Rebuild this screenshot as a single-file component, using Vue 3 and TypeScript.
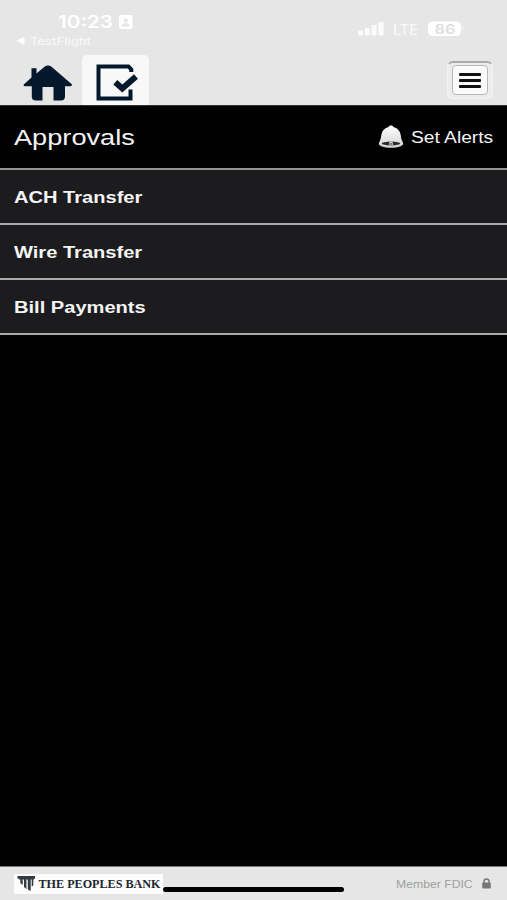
<script setup lang="ts">
import { ref } from 'vue'

interface ApprovalItem {
  id: string
  label: string
}

const items: ApprovalItem[] = [
  { id: 'ach', label: 'ACH Transfer' },
  { id: 'wire', label: 'Wire Transfer' },
  { id: 'bill', label: 'Bill Payments' },
]

const activeTab = ref<'home' | 'approvals'>('approvals')
</script>

<template>
  <div class="screen">
    <header class="top">
      <svg class="status" width="507" height="55" viewBox="0 0 507 55">
        <text class="time" x="58" y="28" textLength="55" lengthAdjust="spacingAndGlyphs">10:23</text>
        <rect x="119" y="15" width="13.5" height="14" rx="2" fill="#fff" />
        <circle cx="125.8" cy="20.4" r="2" fill="#e6e6e6" />
        <path d="M121.5 26.5c.4-4.6 8.200-4.600 8.600 0z" fill="#e6e6e6" />
        <path d="M16 40.700l8.500-4v8z" fill="#fff" />
        <text class="back" x="30" y="44.500" textLength="61" lengthAdjust="spacingAndGlyphs">TestFlight</text>
        <g fill="#fbfbfb">
          <rect x="358" y="30.500" width="5" height="5" rx="1.300" />
          <rect x="364.700" y="28" width="5" height="7.500" rx="1.300" />
          <rect x="371.500" y="25" width="5" height="10.500" rx="1.300" />
          <rect x="378.500" y="22" width="5" height="13.500" rx="1.300" />
        </g>
        <text class="lte" x="393" y="34.800" textLength="25" lengthAdjust="spacingAndGlyphs">LTE</text>
        <path d="M433 21.500h23q5 0 5 5v4.500q0 5-5 5h-23q-5 0-5-5v-4.500q0-5 5-5z" fill="#fff" />
        <rect x="462" y="26" width="1.500" height="5" rx=".7" fill="#f1f1f1" />
        <text class="level" x="434.500" y="33.500" textLength="21" lengthAdjust="spacingAndGlyphs">86</text>
      </svg>
      <nav class="nav">
        <button class="tab home" :class="{ active: activeTab === 'home' }" aria-label="Home" @click="activeTab = 'home'">
          <svg width="50" height="36" viewBox="0 0 50 36">
            <path
              d="M8.500 3.200h5v5.300L21.500 1.700Q25 -.5 28.500 1.700L48.800 19.200Q49.500 21 47.500 21.200H42V32Q41.500 35.500 38 35.500H30.500V22H19.500V35.500H13Q9 35.500 8.800 32V21.200H1.800Q-.2 21 1 19.200L8.500 12.500z"
              fill="#04182b"
            />
          </svg>
        </button>
        <button class="tab" :class="{ active: activeTab === 'approvals' }" aria-label="Approvals" @click="activeTab = 'approvals'">
          <svg width="44" height="38" viewBox="0 0 44 38">
            <path d="M35.300 8V5.500L32.500 2.400H2.500V34.600H34.500V25.500" fill="none" stroke="#04182b" stroke-width="4" />
            <path d="M19.300 18.300L26.300 24.500L40 12.500" fill="none" stroke="#04182b" stroke-width="6" />
          </svg>
        </button>
        <button class="menu" aria-label="Menu">
          <span class="menu-face"><i></i><i></i><i></i></span>
        </button>
      </nav>
    </header>

    <main class="content">
      <div class="title-row">
        <h1 class="title">Approvals</h1>
        <a class="alerts">
          <svg width="26" height="24" viewBox="0 0 26 24">
            <defs>
              <linearGradient id="bell" x1="0" y1="0" x2="0" y2="1">
                <stop offset="0" stop-color="#fff" />
                <stop offset="1" stop-color="#d2d2d2" />
              </linearGradient>
            </defs>
            <path
              d="M13 .5c1.300 0 2.100.6 2.400 1.400 4 .9 6.500 3.600 7.200 7.600.5 3.500 1.100 6 2.500 8.500.8 3-5 4.800-12.100 4.800S.1 21 .9 18c1.400-2.500 2-5 2.500-8.500.7-4 3.200-6.700 7.200-7.600C10.900 1.100 11.700.5 13 .5z"
              fill="url(#bell)"
            />
            <ellipse cx="13" cy="18.500" rx="9.300" ry="1.900" fill="#2a2a2a" />
            <path d="M11.500 16.500h3l.5 3.300q-2 1.600-4 0z" fill="#ccc" />
            <circle cx="13" cy="19" r=".9" fill="#555" />
          </svg>
          <span class="alerts-label">Set Alerts</span>
        </a>
      </div>
      <ul class="list">
        <li v-for="item in items" :key="item.id" class="row">
          <span class="row-label">{{ item.label }}</span>
        </li>
      </ul>
    </main>

    <footer class="footer">
      <svg class="brand" width="149" height="20" viewBox="0 0 149 20">
        <rect width="149" height="20" rx="1" fill="#fdfdfd" />
        <g fill="#343a42">
          <path d="M3.500 2H21v2.200L19.500 5.600H5.500L3.500 4.200z" />
          <path d="M6.300 5h2.400v6L6.300 9zM10 5h2.400v10L10 13zM13.800 5h2.900v12l-2.900-1.500zM17.700 5h1.600v6.500l-1.600 1z" />
        </g>
        <text class="brand-name" x="24.500" y="13.700" textLength="122" lengthAdjust="spacingAndGlyphs">THE PEOPLES BANK</text>
      </svg>
      <div class="indicator"></div>
      <div class="member">
        <span class="member-label">Member FDIC</span>
        <svg width="9" height="11" viewBox="0 0 9 11">
          <path d="M2 5V3.300C2 .1 7 .1 7 3.300V5" fill="none" stroke="#777" stroke-width="1.500" />
          <rect x=".2" y="4.600" width="8.600" height="5.800" rx=".8" fill="#777" />
        </svg>
      </div>
    </footer>
  </div>
</template>

<style>
body {
  margin: 0;
  background: #000;
}
</style>

<style scoped>
.screen {
  display: flex;
  flex-direction: column;
  width: 507px;
  height: 900px;
  overflow: hidden;
  background: #000;
  color: #f4f4f4;
  font-family: 'Liberation Sans', Arial, sans-serif;
}
.top {
  height: 105px;
  background: #e6e6e6;
}
.status {
  display: block;
}
.time {
  fill: #fff;
  font: 600 17px Inter, sans-serif;
}
.back {
  fill: #f8f8f8;
  font: 500 10px Inter, sans-serif;
}
.lte {
  fill: #f8f8f8;
  font: 500 14px Inter, sans-serif;
}
.level {
  fill: #dedede;
  font: 600 13px Inter, sans-serif;
}
.nav {
  display: flex;
  height: 50px;
  padding: 0 14px;
}
button {
  border: 0;
  margin: 0;
  padding: 0;
  background: transparent;
}
.tab {
  display: flex;
  justify-content: center;
  box-sizing: border-box;
  width: 67px;
  height: 50px;
  padding-top: 9px;
  padding-left: 5px;
  border-radius: 5px 5px 0 0;
}
.home {
  width: 68px;
  padding: 10px 0 0;
}
.active {
  background: #f8f8f8;
}
.menu {
  box-sizing: border-box;
  width: 46px;
  height: 38px;
  margin: 6px 0 0 auto;
  padding: 2px 4px 4px;
  border: 1px solid #f5f5f5;
  border-top: 2px solid #aaa;
  border-radius: 6px;
  background: #ededed;
}
.menu-face {
  display: flex;
  flex-direction: column;
  align-items: center;
  justify-content: center;
  gap: 3px;
  box-sizing: border-box;
  height: 30px;
  border: 1px solid #b7b7b7;
  border-radius: 4px;
  background: #fafafa;
}
.menu-face i {
  width: 22px;
  height: 3px;
  border-radius: 1px;
  background: #111;
}
.content {
  flex: 1;
}
.title-row {
  display: flex;
  align-items: center;
  justify-content: space-between;
  box-sizing: border-box;
  height: 65px;
  padding: 0 14px;
  border-top: 1px solid #333;
  border-bottom: 2px solid #929493;
}
.title {
  margin: 2px 0 0;
  font-size: 22px;
  font-weight: 400;
  line-height: 28px;
  transform: scaleX(1.235);
  transform-origin: left;
}
.alerts {
  display: flex;
  align-items: center;
  gap: 7px;
}
.alerts-label {
  width: 82px;
  margin-top: 2px;
  font-size: 16px;
  line-height: 20px;
  white-space: nowrap;
  transform: scaleX(1.2);
  transform-origin: left;
}
.list {
  margin: 0;
  padding: 0;
  list-style: none;
}
.row {
  display: flex;
  align-items: center;
  box-sizing: border-box;
  height: 55.1px;
  padding: 3px 14px 0;
  border-bottom: 2px solid #aaa;
  background: #1c1c1e;
}
.row-label {
  font-size: 16px;
  font-weight: 700;
  line-height: 20px;
  transform: scaleX(1.255);
  transform-origin: left;
}
.footer {
  display: flex;
  align-items: center;
  box-sizing: border-box;
  height: 34px;
  padding: 0 16px 0 14px;
  border-top: 1px solid #777;
  background: #e6e6e6;
}
.indicator {
  width: 181px;
  height: 5px;
  margin-top: 11px;
  border-radius: 3px;
  background: #000;
}
.member {
  display: flex;
  align-items: center;
  gap: 10px;
  margin-left: auto;
}
.member-label {
  width: 76px;
  color: #a0a0a0;
  font-size: 11px;
  line-height: 14px;
  white-space: nowrap;
  transform: scaleX(1.11);
  transform-origin: left;
}
.brand-name {
  fill: #20262e;
  font: 700 12px 'Liberation Serif', serif;
}
</style>
